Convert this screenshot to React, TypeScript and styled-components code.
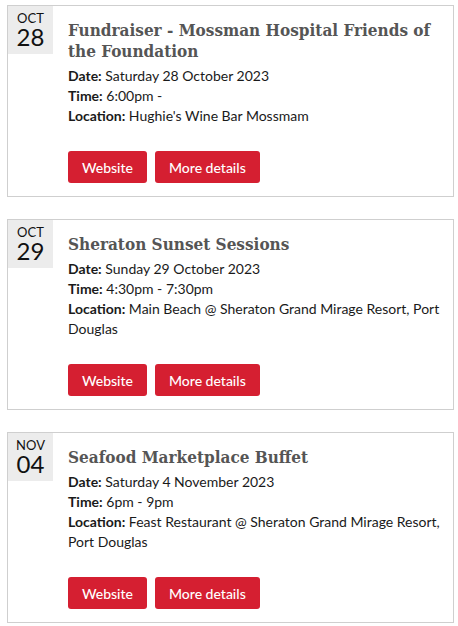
import React from "react";
import styled, { createGlobalStyle } from "styled-components";

const Global = createGlobalStyle`
  html, body { margin: 0; padding: 0; background: #fff; }
  body { font-family: Lato, "Liberation Sans", sans-serif; }
`;

const List = styled.div`
  padding: 5px 4px 0 7px;
  display: flex;
  flex-direction: column;
  gap: 22px;
`;

const Card = styled.div`
  display: flex;
  border: 1px solid #cfcfcf;
  background: #fff;
`;

const DateBox = styled.div`
  flex: 0 0 45px;
  height: 48px;
  background: #ececec;
  display: flex;
  flex-direction: column;
  align-items: center;
  font-family: Lato, sans-serif;
  color: #111;
`;

const Month = styled.div`
  font-size: 13px;
  line-height: 13px;
  margin-top: 6px;
`;

const Day = styled.div`
  font-size: 24px;
  line-height: 24px;
`;

const Body = styled.div`
  flex: 1;
  padding: 14px 10px 13px 15px;
`;

const Title = styled.h2`
  margin: 0;
  font-family: "DejaVu Serif Condensed", "DejaVu Serif", serif;
  font-weight: bold;
  font-size: 17px;
  line-height: 21px;
  color: #555;
`;

const Details = styled.div`
  margin-top: 4px;
  font-size: 14px;
  line-height: 20px;
  color: #1a1a1a;
`;

const Label = styled.b`
  font-weight: bold;
`;

const Buttons = styled.div`
  display: flex;
  gap: 8px;
  margin-top: 25px;
`;

const Button = styled.a`
  display: inline-flex;
  align-items: center;
  justify-content: center;
  height: 32px;
  padding: 0 14px;
  background: #d51f31;
  color: #fff;
  border-radius: 3px;
  font-family: Lato, sans-serif;
  font-size: 14px;
  font-weight: 500;
  text-decoration: none;
`;

type Ev = {
  mon: string;
  day: string;
  title: string;
  date: string;
  time: string;
  loc: string;
};

const events: Ev[] = [
  {
    mon: "OCT",
    day: "28",
    title: "Fundraiser - Mossman Hospital Friends of the Foundation",
    date: "Saturday 28 October 2023",
    time: "6:00pm -",
    loc: "Hughie's Wine Bar Mossmam",
  },
  {
    mon: "OCT",
    day: "29",
    title: "Sheraton Sunset Sessions",
    date: "Sunday 29 October 2023",
    time: "4:30pm - 7:30pm",
    loc: "Main Beach @ Sheraton Grand Mirage Resort, Port Douglas",
  },
  {
    mon: "NOV",
    day: "04",
    title: "Seafood Marketplace Buffet",
    date: "Saturday 4 November 2023",
    time: "6pm - 9pm",
    loc: "Feast Restaurant @ Sheraton Grand Mirage Resort, Port Douglas",
  },
];

export default function App() {
  return (
    <>
      <Global />
      <List>
        {events.map((e) => (
          <Card key={e.title}>
            <DateBox>
              <Month>{e.mon}</Month>
              <Day>{e.day}</Day>
            </DateBox>
            <Body>
              <Title>{e.title}</Title>
              <Details>
                <div>
                  <Label>Date:</Label> {e.date}
                </div>
                <div>
                  <Label>Time:</Label> {e.time}
                </div>
                <div>
                  <Label>Location:</Label> {e.loc}
                </div>
              </Details>
              <Buttons>
                <Button href="#">Website</Button>
                <Button href="#">More details</Button>
              </Buttons>
            </Body>
          </Card>
        ))}
      </List>
    </>
  );
}
